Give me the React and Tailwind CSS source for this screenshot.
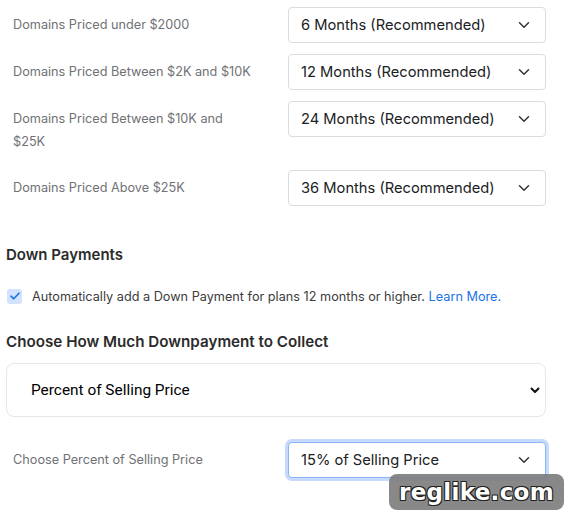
import React from 'react'

const tiers = [
  { label: 'Domains Priced under $2000', value: '6 Months (Recommended)' },
  { label: 'Domains Priced Between $2K and $10K', value: '12 Months (Recommended)' },
  { label: 'Domains Priced Between $10K and $25K', value: '24 Months (Recommended)' },
  { label: 'Domains Priced Above $25K', value: '36 Months (Recommended)' },
]

function Chevron() {
  return (
    <svg width="12" height="8" viewBox="0 0 12 8" fill="none" className="shrink-0">
      <path d="M1.5 1.8 6 6.2l4.5-4.4" stroke="#333" strokeWidth="1.5" strokeLinecap="round" strokeLinejoin="round" />
    </svg>
  )
}

function SelectBox({ value, focused }) {
  return (
    <div
      className={
        'flex h-[36px] w-[258px] items-center justify-between rounded-[4px] border bg-white pl-[12px] pr-[15px] text-[14.7px] text-[#202124] ' +
        (focused ? 'border-[#8ab4f8] ring-[3px] ring-[#c6dafc]' : 'border-[#d9dce0]')
      }
    >
      <span>{value}</span>
      <Chevron />
    </div>
  )
}

function Row({ label, children }) {
  return (
    <div className="flex items-start">
      <div className="w-[250px] shrink-0 py-[6px] pl-[7px] text-[12.7px] leading-[23px] text-[#6f7175]">{label}</div>
      <div className="ml-[32px]">{children}</div>
    </div>
  )
}

export default function App() {
  return (
    <div className="relative h-[515px] w-[565px] overflow-hidden bg-white px-[6px] pt-[7px] font-['Inter',sans-serif]">
      <div className="flex flex-col gap-[11px]">
        {tiers.map((t) => (
          <Row key={t.label} label={t.label}>
            <SelectBox value={t.value} />
          </Row>
        ))}
      </div>

      <h3 className="mt-[38px] text-[15px] font-semibold text-[#2b2b2b]">Down Payments</h3>

      <label className="mt-[20px] flex items-center gap-[10px] pl-[1px] text-[12.7px] text-[#3c3c3c]">
        <span className="flex h-[15px] w-[15px] items-center justify-center rounded-[3px] bg-[#d3e3fd]">
          <svg width="10" height="8" viewBox="0 0 10 8" fill="none">
            <path d="M1 4.2 3.7 6.8 9 1.2" stroke="#1a73e8" strokeWidth="1.6" strokeLinecap="round" strokeLinejoin="round" />
          </svg>
        </span>
        <span>
          Automatically add a Down Payment for plans 12 months or higher.{' '}
          <a href="#" className="text-[#1a73e8]">Learn More.</a>
        </span>
      </label>

      <h3 className="mt-[25px] text-[15.2px] font-semibold text-[#2b2b2b]">Choose How Much Downpayment to Collect</h3>

      <div className="mt-[10px] flex h-[54px] w-[540px] items-center justify-between rounded-[8px] border border-[#e6e7ea] pl-[24px] pr-[5px] font-['Roboto',sans-serif] text-[15.4px] text-black">
        <span>Percent of Selling Price</span>
        <svg width="10" height="7" viewBox="0 0 10 7" fill="none">
          <path d="M1.5 1.5 5 5l3.5-3.5" stroke="#111" strokeWidth="2" strokeLinecap="round" strokeLinejoin="round" />
        </svg>
      </div>

      <div className="mt-[25px]">
        <Row label="Choose Percent of Selling Price">
          <SelectBox value="15% of Selling Price" focused />
        </Row>
      </div>

      <div className="absolute left-[389px] top-[474px] flex h-[36px] w-[175px] items-center justify-center rounded-[8px] bg-[#7b7b7b]/90">
        <span className="font-['DejaVu_Sans',sans-serif] text-[23px] font-bold tracking-[0.3px] text-white [text-shadow:1px_1px_0_#222,-1px_-1px_0_#222,1px_-1px_0_#222,-1px_1px_0_#222]">
          reglike.com
        </span>
      </div>
    </div>
  )
}
